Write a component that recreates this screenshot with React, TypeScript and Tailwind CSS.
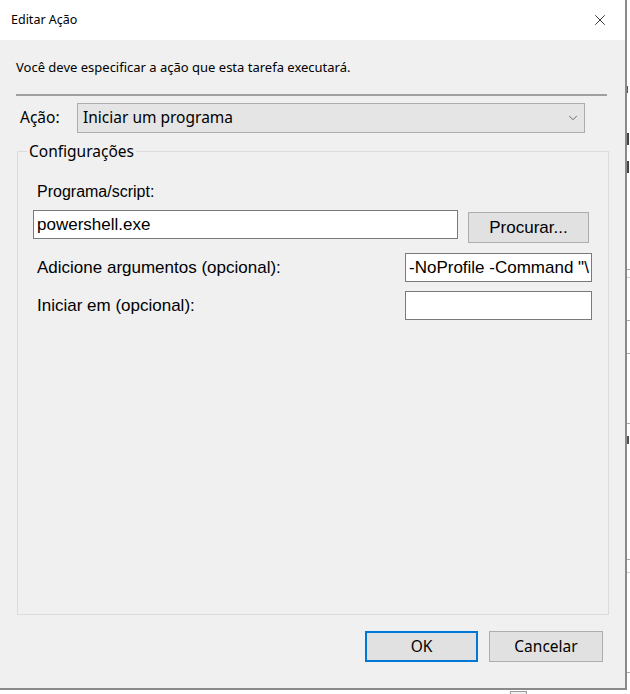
import { ChevronDown, X } from 'lucide-react';

const ui = "font-['Noto_Sans',sans-serif]";
const classic = "font-['Liberation_Sans',Arial,sans-serif]";

function TextBox({ value, className }: { value?: string; className: string }) {
  return (
    <div
      className={`flex items-center overflow-hidden whitespace-nowrap border border-[#7a7a7a] bg-white px-[3px] text-[17px] text-black ${classic} ${className}`}
    >
      {value}
    </div>
  );
}

function Button({ label, primary, className }: { label: string; primary?: boolean; className: string }) {
  return (
    <div
      className={`flex items-center justify-center bg-[#e1e1e1] text-black ${
        primary ? 'border-2 border-[#0078d7]' : 'border border-[#adadad]'
      } ${className}`}
    >
      {label}
    </div>
  );
}

export default function App() {
  return (
    <div className={`relative h-[694px] w-[630px] overflow-hidden bg-white ${ui}`}>
      {/* background window fragments on the right edge */}
      <div className="absolute left-[627px] top-0 flex h-full w-[3px] flex-col">
        <div className="mt-[86px] h-[7px] border-l border-[#555]" />
        <div className="mt-[40px] h-[12px] w-[2px] bg-[#444]" />
        <div className="mt-[16px] h-[12px] w-[2px] bg-[#444]" />
        <div className="mt-[96px] h-px bg-[#aaa]" />
        <div className="mt-[7px] h-px bg-[#ccc]" />
        <div className="mt-[42px] h-px bg-[#aaa]" />
        <div className="mt-[32px] h-px bg-[#aaa]" />
        <div className="mt-[69px] h-px bg-[#aaa]" />
        <div className="mt-[12px] h-[8px] w-[2px] bg-[#555]" />
        <div className="mt-[115px] h-px bg-[#aaa]" />
        <div className="mt-[12px] h-px bg-[#ccc]" />
        <div className="mt-[99px] h-px bg-[#aaa]" />
      </div>

      {/* dialog window */}
      <div className="flex h-[690px] w-[627px] flex-col border-r-2 border-b-2 border-[#8a8a8a] bg-[#f0f0f0]">
        <div className="flex h-[40px] shrink-0 items-center justify-between bg-white pl-[11px] pr-[16px]">
          <span className="text-[12.5px] text-black">Editar Ação</span>
          <X className="h-[18px] w-[18px] text-[#222]" strokeWidth={1.2} />
        </div>

        <div className="flex flex-1 flex-col px-[16px]">
          <p className="mt-[16px] h-[22px] text-[13px] leading-[22px] text-black">
            Você deve especificar a ação que esta tarefa executará.
          </p>
          <div className="mt-[16px] mr-[2px] h-[2px] bg-[#a0a0a0]" />

          <div className="mt-[7px] flex h-[30px] items-center">
            <span className="ml-[4px] w-[57px] text-[15.5px] text-black">Ação:</span>
            <div className="flex h-[30px] w-[508px] items-center justify-between border border-[#adadad] bg-[#e5e5e5] pl-[5px] pr-[4px] text-[15.5px] text-black">
              <span>Iniciar um programa</span>
              <ChevronDown className="h-[14px] w-[14px] text-[#444]" strokeWidth={1.3} />
            </div>
          </div>

          {/* group box */}
          <div className="relative ml-[1px] mt-[18px] h-[464px] w-[592px] border border-[#dcdcdc]">
            <span className="absolute left-[9px] top-[-12px] bg-[#f0f0f0] px-[2px] text-[15.5px] leading-[22px] text-black">
              Configurações
            </span>
            <div className={`flex flex-col pl-[15px] ${classic}`}>
              <span className="mt-[30px] ml-[4px] h-[20px] text-[16px] leading-[20px] text-black">
                Programa/script:
              </span>
              <div className="mt-[8px] flex items-start">
                <TextBox value="powershell.exe" className="h-[29px] w-[425px]" />
                <Button label="Procurar..." className={`ml-[10px] mt-[2px] h-[31px] w-[121px] text-[17px] ${classic}`} />
              </div>
              <div className="mt-[10px] flex items-center justify-between pr-[16px]">
                <span className="ml-[4px] text-[17px] text-black">Adicione argumentos (opcional):</span>
                <TextBox value={'-NoProfile -Command "\\'} className="h-[29px] w-[187px]" />
              </div>
              <div className="mt-[9px] flex items-center justify-between pr-[16px]">
                <span className="ml-[4px] text-[17px] text-black">Iniciar em (opcional):</span>
                <TextBox className="h-[29px] w-[187px]" />
              </div>
            </div>
          </div>

          <div className="mt-[16px] flex justify-end gap-[11px] pr-[6px]">
            <Button label="OK" primary className="h-[31px] w-[113px] text-[15.5px]" />
            <Button label="Cancelar" className="h-[31px] w-[114px] text-[15.5px]" />
          </div>
        </div>
      </div>

      {/* fragment below the window */}
      <div className="absolute left-[510px] top-[691px] h-[3px] w-[17px] border-x border-t border-[#999] bg-[#f0f0f0]" />
    </div>
  );
}
